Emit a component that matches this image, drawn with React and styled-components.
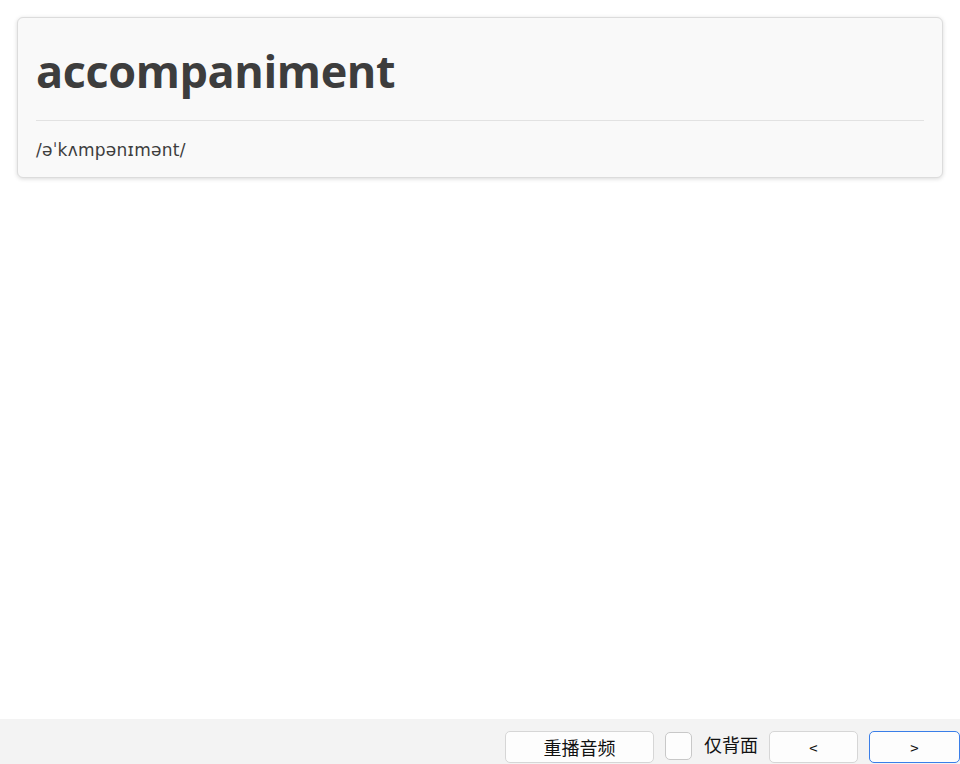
import styled, { createGlobalStyle } from "styled-components";

const Global = createGlobalStyle`
  html, body {
    margin: 0;
    padding: 0;
    background: #ffffff;
    font-family: "Open Sans", "Noto Sans", "Noto Sans CJK SC", sans-serif;
  }
  #root {
    height: 764px;
  }
`;

const Page = styled.div`
  height: 764px;
  display: flex;
  flex-direction: column;
  overflow: hidden;
`;

const Main = styled.div`
  flex: 1;
  padding: 17px 17px 0 17px;
`;

const Card = styled.div`
  background: #f9f9f9;
  border: 1px solid #dcdcdc;
  border-radius: 6px;
  box-shadow: 0 1px 4px rgba(0, 0, 0, 0.15);
  padding: 0 18px;
  height: 161px;
  box-sizing: border-box;
`;

const Word = styled.h1`
  margin: 0;
  padding-top: 25px;
  height: 78px;
  box-sizing: border-box;
  font-size: 45px;
  font-weight: 700;
  line-height: 56px;
  color: #3d3d3d;
  letter-spacing: -0.4px;
`;

const Divider = styled.hr`
  margin: 24px 0 0 0;
  border: none;
  border-top: 1px solid #e2e2e2;
`;

const Phonetic = styled.div`
  padding-top: 19px;
  font-size: 17px;
  line-height: 20px;
  color: #3d3d3d;
  letter-spacing: 0.25px;
  font-family: "DejaVu Sans", "Noto Sans", sans-serif;
`;

const Bar = styled.div`
  height: 45px;
  background: #f3f3f3;
  display: flex;
  justify-content: flex-end;
  align-items: flex-start;
  padding-top: 12px;
  box-sizing: border-box;
  gap: 11px;
  font-family: "Noto Sans CJK SC", "Noto Sans", sans-serif;
`;

const Button = styled.button`
  width: ${(p) => p.$w}px;
  height: 32px;
  background: #fdfdfd;
  border: 1px solid ${(p) => (p.$focus ? "#3a7ee8" : "#d6d6d6")};
  border-radius: 5px;
  font-family: "Noto Sans CJK SC", "Noto Sans", sans-serif;
  font-size: ${(p) => (p.$small ? 15 : 18)}px;
  color: #111;
  padding: 0;
  display: flex;
  align-items: center;
  justify-content: center;
`;

const Check = styled.div`
  width: 25px;
  height: 26px;
  margin-top: 1px;
  border: 1px solid #c8c8c8;
  border-radius: 5px;
  background: #fdfdfd;
`;

const Label = styled.span`
  font-size: 18px;
  line-height: 26px;
  color: #111;
  margin-left: 1px;
`;

export default function App() {
  return (
    <Page>
      <Global />
      <Main>
        <Card>
          <Word>accompaniment</Word>
          <Divider />
          <Phonetic>/əˈkʌmpənɪmənt/</Phonetic>
        </Card>
      </Main>
      <Bar>
        <Button $w={149}>重播音频</Button>
        <Check />
        <Label>仅背面</Label>
        <Button $w={89} $small>&lt;</Button>
        <Button $w={91} $small $focus>&gt;</Button>
      </Bar>
    </Page>
  );
}
